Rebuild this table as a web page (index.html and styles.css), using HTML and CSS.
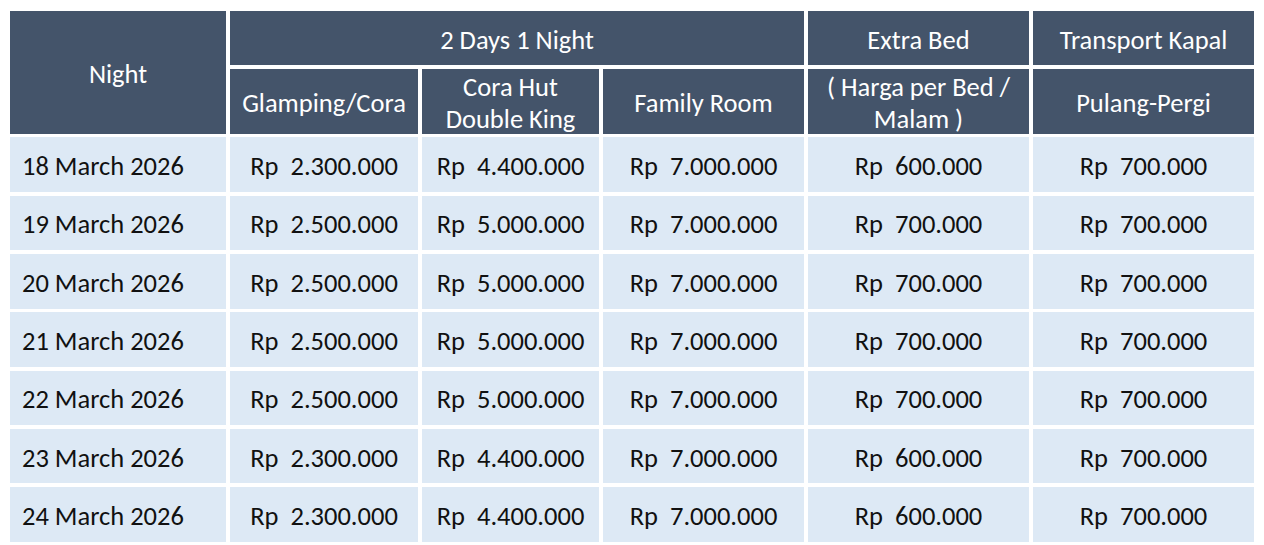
FILE: index.html
```html
<!DOCTYPE html>
<html lang="id">
<head>
<meta charset="utf-8">
<title>Harga Paket</title>
<link rel="stylesheet" href="styles.css">
</head>
<body>
<div class="sheet">
  <div class="cell head night">Night</div>
  <div class="cell head span3">2 Days 1 Night</div>
  <div class="cell head">Extra Bed</div>
  <div class="cell head">Transport Kapal</div>
  <div class="cell head">Glamping/Cora</div>
  <div class="cell head">Cora Hut<br>Double King</div>
  <div class="cell head">Family Room</div>
  <div class="cell head">( Harga per Bed /<br>Malam )</div>
  <div class="cell head">Pulang-Pergi</div>

  <div class="cell date">18 March 2026</div>
  <div class="cell"><span class="cur">Rp</span>2.300.000</div>
  <div class="cell"><span class="cur">Rp</span>4.400.000</div>
  <div class="cell"><span class="cur">Rp</span>7.000.000</div>
  <div class="cell"><span class="cur">Rp</span>600.000</div>
  <div class="cell"><span class="cur">Rp</span>700.000</div>

  <div class="cell date">19 March 2026</div>
  <div class="cell"><span class="cur">Rp</span>2.500.000</div>
  <div class="cell"><span class="cur">Rp</span>5.000.000</div>
  <div class="cell"><span class="cur">Rp</span>7.000.000</div>
  <div class="cell"><span class="cur">Rp</span>700.000</div>
  <div class="cell"><span class="cur">Rp</span>700.000</div>

  <div class="cell date">20 March 2026</div>
  <div class="cell"><span class="cur">Rp</span>2.500.000</div>
  <div class="cell"><span class="cur">Rp</span>5.000.000</div>
  <div class="cell"><span class="cur">Rp</span>7.000.000</div>
  <div class="cell"><span class="cur">Rp</span>700.000</div>
  <div class="cell"><span class="cur">Rp</span>700.000</div>

  <div class="cell date">21 March 2026</div>
  <div class="cell"><span class="cur">Rp</span>2.500.000</div>
  <div class="cell"><span class="cur">Rp</span>5.000.000</div>
  <div class="cell"><span class="cur">Rp</span>7.000.000</div>
  <div class="cell"><span class="cur">Rp</span>700.000</div>
  <div class="cell"><span class="cur">Rp</span>700.000</div>

  <div class="cell date">22 March 2026</div>
  <div class="cell"><span class="cur">Rp</span>2.500.000</div>
  <div class="cell"><span class="cur">Rp</span>5.000.000</div>
  <div class="cell"><span class="cur">Rp</span>7.000.000</div>
  <div class="cell"><span class="cur">Rp</span>700.000</div>
  <div class="cell"><span class="cur">Rp</span>700.000</div>

  <div class="cell date">23 March 2026</div>
  <div class="cell"><span class="cur">Rp</span>2.300.000</div>
  <div class="cell"><span class="cur">Rp</span>4.400.000</div>
  <div class="cell"><span class="cur">Rp</span>7.000.000</div>
  <div class="cell"><span class="cur">Rp</span>600.000</div>
  <div class="cell"><span class="cur">Rp</span>700.000</div>

  <div class="cell date">24 March 2026</div>
  <div class="cell"><span class="cur">Rp</span>2.300.000</div>
  <div class="cell"><span class="cur">Rp</span>4.400.000</div>
  <div class="cell"><span class="cur">Rp</span>7.000.000</div>
  <div class="cell"><span class="cur">Rp</span>600.000</div>
  <div class="cell"><span class="cur">Rp</span>700.000</div>
</div>
</body>
</html>
```
FILE: styles.css
```css
html, body {
  margin: 0;
  padding: 0;
  background: #ffffff;
}

body {
  font-family: "Carlito", "Lato", "Noto Sans", sans-serif;
  font-size: 26.5px;
  color: #111111;
}

.sheet {
  display: grid;
  grid-template-columns: 216px 188px 177px 201px 221px 221px;
  grid-template-rows: 54px 65px repeat(7, 54.6px);
  column-gap: 4px;
  row-gap: 3.7px;
  margin: 11px 0 0 10px;
  width: max-content;
}

.cell {
  display: flex;
  align-items: center;
  justify-content: center;
  text-align: center;
  background: #dde9f5;
  line-height: 32px;
  white-space: nowrap;
  padding-top: 3px;
  box-sizing: border-box;
}

.head {
  background: #44546a;
  color: #ffffff;
}

.night {
  grid-row: span 2;
}

.span3 {
  grid-column: span 3;
}

.date {
  justify-content: flex-start;
  padding-left: 12px;
}

.cur {
  margin-right: 12px;
}
```
